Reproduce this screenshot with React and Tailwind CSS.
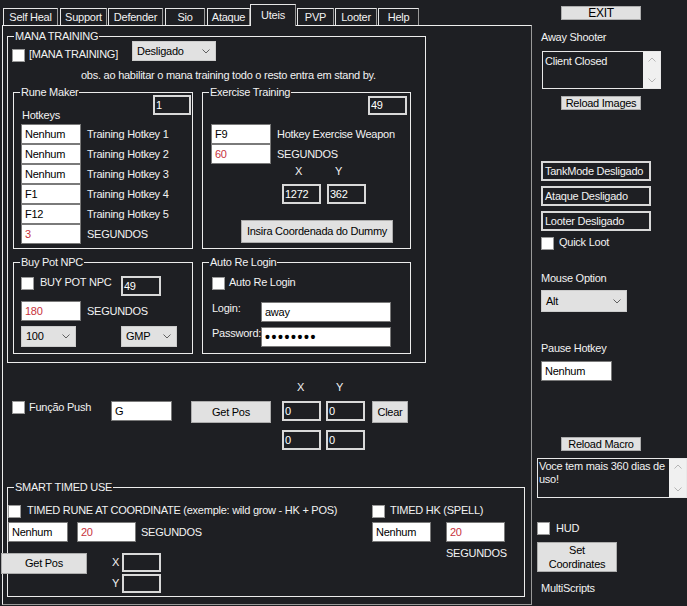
import React from "react";

const Chk = ({ className = "" }) => (
  <div className={"h-[13px] w-[13px] shrink-0 border border-[#9a9a9a] bg-white " + className} />
);

const WIn = ({ className = "", red, children }) => (
  <div
    className={
      "flex shrink-0 items-center border border-[#7a7a7a] bg-white pl-[3px] leading-[13px] " +
      (red ? "text-[#c8323c] " : "text-black ") +
      className
    }
  >
    {children}
  </div>
);

const DBox = ({ className = "", children }) => (
  <div className={"flex shrink-0 items-center border-2 border-[#d9d9d9] pl-[1px] leading-[13px] text-white " + className}>
    {children}
  </div>
);

const Btn = ({ className = "", children }) => (
  <div className={"flex shrink-0 items-center justify-center border border-[#adadad] bg-[#e1e1e1] leading-[13px] text-black " + className}>
    {children}
  </div>
);

const Chevron = () => (
  <svg width="8" height="5" viewBox="0 0 8 5">
    <polyline points="0.5,0.5 4,4 7.5,0.5" fill="none" stroke="#606060" strokeWidth="1" />
  </svg>
);

const Sel = ({ className = "", children }) => (
  <div className={"flex shrink-0 items-center justify-between border border-[#cccccc] bg-[#e1e1e1] pl-[4px] pr-[5px] leading-[13px] text-black " + className}>
    <span>{children}</span>
    <Chevron />
  </div>
);

const Title = ({ children, className = "" }) => (
  <div className={"w-fit bg-[#1e1f23] px-[1px] leading-[13px] " + className}>{children}</div>
);

const ScrollBar = () => (
  <div className="flex w-[17px] shrink-0 flex-col items-center justify-between bg-[#f0f0f0] py-[5px]">
    <svg width="8" height="5" viewBox="0 0 8 5">
      <polyline points="0.5,4.5 4,1 7.5,4.5" fill="none" stroke="#b5b5b5" strokeWidth="1" />
    </svg>
    <svg width="8" height="5" viewBox="0 0 8 5">
      <polyline points="0.5,0.5 4,4 7.5,0.5" fill="none" stroke="#b5b5b5" strokeWidth="1" />
    </svg>
  </div>
);

const tabs = [
  { label: "Self Heal", cls: "ml-0 w-[55px]" },
  { label: "Support", cls: "ml-[2px] w-[47px]" },
  { label: "Defender", cls: "ml-[1px] w-[55px]" },
  { label: "Sio", cls: "ml-[2px] w-[40px]" },
  { label: "Ataque", cls: "ml-[2px] w-[43px]" },
  { label: "Uteis", cls: "ml-0 w-[46px]", sel: true },
  { label: "PVP", cls: "ml-[1px] w-[37px]" },
  { label: "Looter", cls: "ml-[1px] w-[42px]" },
  { label: "Help", cls: "ml-[1px] w-[41px]" },
];

function RuneMaker() {
  const rows = [
    ["Nenhum", "Training Hotkey 1"],
    ["Nenhum", "Training Hotkey 2"],
    ["Nenhum", "Training Hotkey 3"],
    ["F1", "Training Hotkey 4"],
    ["F12", "Training Hotkey 5"],
    ["3", "SEGUNDOS", true],
  ];
  return (
    <div className="ml-[5px] h-[157px] w-[180px] shrink-0 border border-[#ececec]">
      <div className="-mt-[7px] flex items-start justify-between">
        <div className="flex flex-col">
          <Title className="ml-[6px]">Rune Maker</Title>
          <div className="ml-[8px] mt-[10px] leading-[13px]">Hotkeys</div>
        </div>
        <DBox className="mr-[1px] mt-[9px] h-[20px] w-[38px]">1</DBox>
      </div>
      <div className="mt-[2px] flex flex-col">
        {rows.map(([v, l, red], i) => (
          <div key={i} className="flex items-center">
            <WIn red={red} className="ml-[7px] h-[20px] w-[60px]">{v}</WIn>
            <span className="ml-[6px] leading-[13px]">{l}</span>
          </div>
        ))}
      </div>
    </div>
  );
}

function Exercise() {
  return (
    <div className="ml-[9px] h-[157px] w-[209px] shrink-0 border border-[#ececec]">
      <div className="-mt-[7px] flex items-start justify-between">
        <Title className="ml-[6px]">Exercise Training</Title>
        <DBox className="mr-[3px] mt-[10px] h-[19px] w-[39px]">49</DBox>
      </div>
      <div className="mt-[9px] flex items-center">
        <WIn className="ml-[8px] h-[20px] w-[60px]">F9</WIn>
        <span className="ml-[6px] leading-[13px]">Hotkey Exercise Weapon</span>
      </div>
      <div className="flex items-center">
        <WIn red className="ml-[8px] h-[20px] w-[60px]">60</WIn>
        <span className="ml-[6px] leading-[13px]">SEGUNDOS</span>
      </div>
      <div className="mt-[1px] flex leading-[13px]">
        <span className="ml-[92px]">X</span>
        <span className="ml-[33px]">Y</span>
      </div>
      <div className="mt-[6px] flex">
        <DBox className="ml-[79px] h-[20px] w-[39px]">1272</DBox>
        <DBox className="ml-[6px] h-[20px] w-[39px]">362</DBox>
      </div>
      <Btn className="ml-[38px] mt-[16px] h-[23px] w-[152px]">Insira Coordenada do Dummy</Btn>
    </div>
  );
}

function BuyPot() {
  return (
    <div className="ml-[5px] h-[92px] w-[180px] shrink-0 border border-[#ececec]">
      <Title className="-mt-[7px] ml-[6px]">Buy Pot NPC</Title>
      <div className="mt-[7px] flex items-start">
        <Chk className="ml-[7px] mt-[1px]" />
        <div className="ml-[6px] w-[81px] leading-[13px]">BUY POT NPC</div>
        <DBox className="h-[20px] w-[40px]">49</DBox>
      </div>
      <div className="mt-[5px] flex items-center">
        <WIn red className="ml-[7px] h-[20px] w-[60px]">180</WIn>
        <span className="ml-[6px] leading-[13px]">SEGUNDOS</span>
      </div>
      <div className="mt-[5px] flex">
        <Sel className="ml-[7px] h-[21px] w-[55px]">100</Sel>
        <Sel className="ml-[45px] h-[21px] w-[56px]">GMP</Sel>
      </div>
    </div>
  );
}

function AutoLogin() {
  return (
    <div className="ml-[9px] h-[92px] w-[209px] shrink-0 border border-[#ececec]">
      <Title className="-mt-[7px] ml-[6px]">Auto Re Login</Title>
      <div className="mt-[7px] flex items-start">
        <Chk className="ml-[9px] mt-[1px]" />
        <div className="ml-[4px] leading-[13px]">Auto Re Login</div>
      </div>
      <div className="mt-[12px] flex items-start">
        <div className="ml-[9px] w-[49px] leading-[13px]">Login:</div>
        <WIn className="h-[20px] w-[130px]">away</WIn>
      </div>
      <div className="mt-[5px] flex items-start">
        <div className="ml-[9px] w-[49px] leading-[13px]">Password:</div>
        <WIn className="h-[20px] w-[130px]">
          <span className="text-[14px] font-bold tracking-[1.6px]">••••••••</span>
        </WIn>
      </div>
    </div>
  );
}

function SmartTimed() {
  return (
    <div className="ml-[4px] mt-[37px] h-[110px] w-[518px] border border-[#ececec]">
      <Title className="-mt-[7px] ml-[6px]">SMART TIMED USE</Title>
      <div className="mt-[10px] flex items-start">
        <Chk className="mt-[1px]" />
        <div className="ml-[6px] w-[345px] leading-[13px]">TIMED RUNE AT COORDINATE (exemple: wild grow - HK + POS)</div>
        <Chk className="mt-[1px]" />
        <div className="ml-[5px] leading-[13px]">TIMED HK (SPELL)</div>
      </div>
      <div className="mt-[4px] flex h-[20px] items-start">
        <div className="flex w-[364px] items-center">
          <WIn className="h-[20px] w-[60px]">Nenhum</WIn>
          <WIn red className="ml-[9px] h-[20px] w-[59px]">20</WIn>
          <span className="ml-[5px] leading-[13px]">SEGUNDOS</span>
        </div>
        <WIn className="h-[20px] w-[59px]">Nenhum</WIn>
        <div className="ml-[15px] flex flex-col">
          <WIn red className="h-[20px] w-[59px]">20</WIn>
          <span className="mt-[5px] leading-[13px]">SEGUNDOS</span>
        </div>
      </div>
      <div className="mt-[11px] flex items-start">
        <Btn className="-ml-[7px] h-[21px] w-[86px]">Get Pos</Btn>
        <div className="ml-[25px] grid grid-cols-[10px_39px] items-center gap-y-[2px] leading-[13px]">
          <span>X</span>
          <DBox className="h-[19px]"></DBox>
          <span>Y</span>
          <DBox className="h-[19px]"></DBox>
        </div>
      </div>
    </div>
  );
}

function Sidebar() {
  return (
    <div className="flex flex-1 flex-col pl-[4px]">
      <Btn className="ml-[24px] mt-[6px] h-[14px] w-[80px] text-[12px] leading-[12px]">EXIT</Btn>
      <div className="ml-[4px] mt-[11px] leading-[13px]">Away Shooter</div>
      <div className="ml-[5px] mt-[7px] flex h-[38px] w-[119px] border border-[#e8e8e8]">
        <div className="flex-1 pl-[2px] pt-[3px] leading-[13px]">Client Closed</div>
        <ScrollBar />
      </div>
      <Btn className="ml-[24px] mt-[7px] h-[14px] w-[80px] leading-[12px]">Reload Images</Btn>
      <div className="ml-[4px] mt-[51px] flex h-[20px] w-[110px] items-center border-2 border-[#d9d9d9] pl-[2px] leading-[13px]">TankMode Desligado</div>
      <div className="ml-[4px] mt-[5px] flex h-[20px] w-[110px] items-center border-2 border-[#d9d9d9] pl-[2px] leading-[13px]">Ataque Desligado</div>
      <div className="ml-[4px] mt-[5px] flex h-[20px] w-[110px] items-center border-2 border-[#d9d9d9] pl-[2px] leading-[13px]">Looter Desligado</div>
      <div className="ml-[4px] mt-[5px] flex items-start">
        <Chk className="mt-[1px]" />
        <span className="ml-[5px] leading-[13px]">Quick Loot</span>
      </div>
      <div className="ml-[4px] mt-[22px] leading-[13px]">Mouse Option</div>
      <Sel className="ml-[4px] mt-[5px] h-[22px] w-[86px]">Alt</Sel>
      <div className="ml-[4px] mt-[30px] leading-[13px]">Pause Hotkey</div>
      <WIn className="ml-[4px] mt-[6px] h-[20px] w-[71px]">Nenhum</WIn>
      <Btn className="ml-[24px] mt-[56px] h-[14px] w-[80px] leading-[12px]">Reload Macro</Btn>
      <div className="mt-[7px] flex h-[40px] w-[150px] border border-[#e8e8e8]">
        <div className="flex-1 pl-[1px] pt-[1px] leading-[13px]">Voce tem mais 360 dias de uso!</div>
        <ScrollBar />
      </div>
      <div className="mt-[24px] flex items-start">
        <Chk />
        <span className="ml-[6px] leading-[13px]">HUD</span>
      </div>
      <Btn className="mt-[7px] h-[30px] w-[80px] flex-col text-center leading-[14px]">
        <span>Set</span>
        <span>Coordinates</span>
      </Btn>
      <div className="ml-[4px] mt-[10px] leading-[13px]">MultiScripts</div>
    </div>
  );
}

export default function App() {
  return (
    <div className="flex h-[606px] w-[687px] overflow-hidden bg-[#1e1f23] font-['Liberation_Sans',Arial,sans-serif] text-[11px] tracking-[-0.25px] text-[#f2f2f2]">
      <div className="flex w-[533px] shrink-0 flex-col">
        <div className="flex h-[25px] items-end pl-[3px]">
          {tabs.map((t) =>
            t.sel ? (
              <div
                key={t.label}
                className={"relative z-10 -mb-[1px] flex h-[22px] items-start justify-center border border-b-0 border-[#e6e6e6] border-r-[#9a9a9a] bg-[#1e1f23] pt-[4px] leading-[13px] " + t.cls}
              >
                {t.label}
              </div>
            ) : (
              <div
                key={t.label}
                className={"flex h-[17px] items-center justify-center border border-b-0 border-[#e6e6e6] border-r-[#9a9a9a] leading-[13px] " + t.cls}
              >
                {t.label}
              </div>
            )
          )}
        </div>
        <div className="ml-[2px] h-[580px] w-[530px] border border-[#eeeeee] border-b-[#9a9a9a] border-r-[#9a9a9a]">
          <div className="ml-[4px] mt-[10px] h-[327px] w-[419px] border border-[#ececec]">
            <Title className="-mt-[7px] ml-[6px]">MANA TRAINING</Title>
            <div className="-mt-[2px] flex h-[20px] items-start">
              <Chk className="ml-[4px] mt-[8px]" />
              <div className="ml-[4px] mt-[7px] w-[103px] leading-[13px]">[MANA TRAINING]</div>
              <Sel className="h-[20px] w-[84px]">Desligado</Sel>
            </div>
            <div className="ml-[73px] mt-[8px] leading-[13px]">obs. ao habilitar o mana training todo o resto entra em stand by.</div>
            <div className="mt-[10px] flex">
              <RuneMaker />
              <Exercise />
            </div>
            <div className="mt-[13px] flex">
              <BuyPot />
              <AutoLogin />
            </div>
          </div>
          <div className="mt-[18px] flex leading-[13px]">
            <span className="ml-[294px]">X</span>
            <span className="ml-[32px]">Y</span>
          </div>
          <div className="mt-[7px] flex items-start">
            <Chk className="ml-[9px]" />
            <div className="ml-[4px] w-[82px] leading-[13px]">Função Push</div>
            <WIn className="h-[20px] w-[61px]">G</WIn>
            <Btn className="ml-[19px] h-[22px] w-[80px]">Get Pos</Btn>
            <div className="ml-[11px] grid grid-cols-[39px_39px] gap-x-[5px] gap-y-[9px]">
              <DBox className="h-[20px]">0</DBox>
              <DBox className="h-[20px]">0</DBox>
              <DBox className="h-[20px]">0</DBox>
              <DBox className="h-[20px]">0</DBox>
            </div>
            <Btn className="ml-[7px] h-[22px] w-[36px]">Clear</Btn>
          </div>
          <SmartTimed />
        </div>
      </div>
      <Sidebar />
    </div>
  );
}
